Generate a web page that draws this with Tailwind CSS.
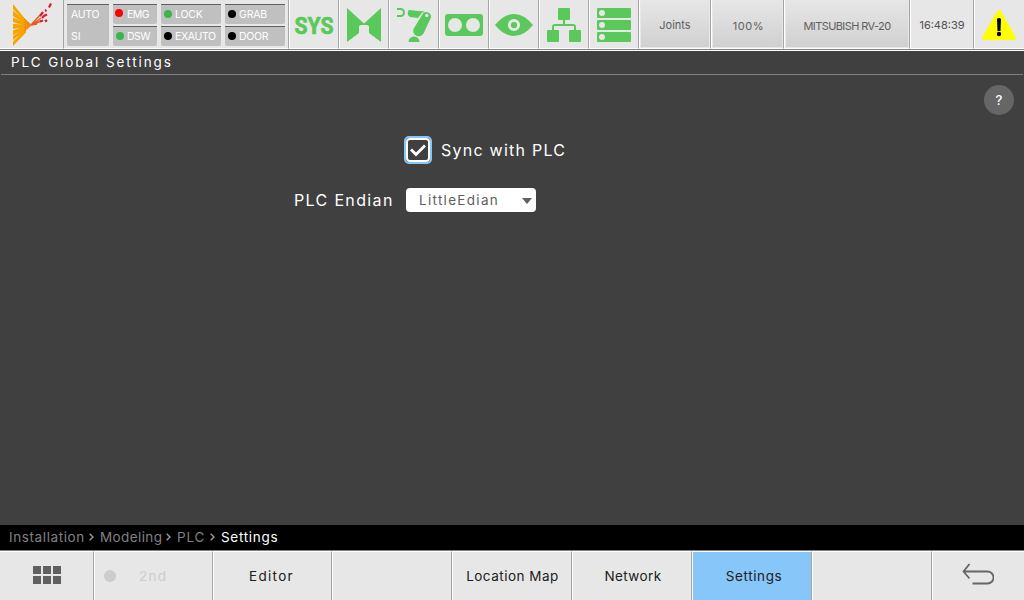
<!DOCTYPE html>
<html lang="en">
<head>
<meta charset="utf-8">
<title>PLC Global Settings</title>
<script src="https://cdn.jsdelivr.net/npm/@tailwindcss/browser@4"></script>
</head>
<body class="w-[1024px] h-[600px] overflow-hidden bg-[#404040] font-[Inter,'Liberation_Sans',sans-serif] flex flex-col whitespace-nowrap">
<header class="h-[50px] shrink-0 flex bg-[#e7e7e7] border-b border-[#808080]">
  <div class="w-16 border-r border-[#a5a5a5] border-b border-b-white">
    <svg class="w-[63px] h-12" viewBox="0 0 63 48">
      <g fill="#f5a400">
        <path d="M13 4l13 16v3L13 9z"/><path d="M13 10.500l13 11v3L13 16z"/><path d="M13 17.500l13 5.500v3l-13-4z"/><path d="M13 24l13 .5v2.500l-13 2z"/><path d="M13 30.500l13-5v3l-13 6.500z"/><path d="M13 36l13-9v3L13 40z"/><path d="M13 41.500l13-13v4L13 46z"/>
      </g>
      <path d="M24 19l7 6M24 22l7 3M24 25h7M24 28l7-3M24 31l7-6" stroke="#ee8a10" stroke-width="1.500"/>
      <path d="M31 25l9-10M32 25l9-7M32 25l9-4M31 25l6-1" stroke="#ea5a20" stroke-width="1.400" fill="none"/>
      <path d="M40 16l3-4M42 18l3-3M40 21.500l3-1M45 15.500l2-1M45 21.500l2-1.500M49 7.500l2-4M45 11l1.500-1" stroke="#dc1e28" stroke-width="2.200" fill="none"/>
    </svg>
  </div>
  <div class="w-[225px] flex gap-1 pl-[3px] pt-1 pb-[2px] border-r border-[#a5a5a5] border-b border-b-white text-[10.5px] leading-[20px] text-white">
    <div class="w-[42px] h-[42px] bg-[#c0c0c0] border-t border-[#606060] rounded-b-[2px] pl-1">
      <div class="h-[22px] tracking-[-0.3px]">AUTO</div><div class="h-[19px]">SI</div>
    </div>
    <div class="w-11 grid gap-[2px] content-start">
      <div class="h-5 bg-[#c0c0c0] border-t border-[#606060] rounded-b-[2px] flex items-start pl-[2px] gap-1"><i class="size-2 mt-[4px] rounded-full bg-[#f00]"></i><span class="tracking-[-0.5px]">EMG</span></div>
      <div class="h-5 bg-[#c0c0c0] border-t border-[#606060] rounded-b-[2px] flex items-start pl-[3px] gap-[3px]"><i class="size-2 mt-[5px] rounded-full bg-[#39b54a]"></i><span class="tracking-[-0.5px]">DSW</span></div>
    </div>
    <div class="w-[60px] grid gap-[2px] content-start">
      <div class="h-5 bg-[#c0c0c0] border-t border-[#606060] rounded-b-[2px] flex items-start pl-[3px] gap-[3px]"><i class="size-2 mt-[5px] rounded-full bg-[#39b54a]"></i><span class="tracking-[-0.2px]">LOCK</span></div>
      <div class="h-5 bg-[#c0c0c0] border-t border-[#606060] rounded-b-[2px] flex items-start pl-[3px] gap-[3px]"><i class="size-2 mt-[5px] rounded-full bg-black"></i><span class="tracking-[-0.35px]">EXAUTO</span></div>
    </div>
    <div class="w-[60px] grid gap-[2px] content-start">
      <div class="h-5 bg-[#c0c0c0] border-t border-[#606060] rounded-b-[2px] flex items-start pl-[3px] gap-[3px]"><i class="size-2 mt-[5px] rounded-full bg-black"></i><span class="tracking-[-0.2px]">GRAB</span></div>
      <div class="h-5 bg-[#c0c0c0] border-t border-[#606060] rounded-b-[2px] flex items-start pl-[3px] gap-[3px]"><i class="size-2 mt-[5px] rounded-full bg-black"></i><span class="tracking-[-0.3px]">DOOR</span></div>
    </div>
  </div>
  <div class="w-[50px] border-r border-r-[#a5a5a5] border-l border-l-white border-b border-b-white">
    <svg class="w-12 h-12 overflow-visible" viewBox="290 0 48 48"><text x="294.500" y="33.800" textLength="39" lengthAdjust="spacingAndGlyphs" font-family="Roboto" font-weight="700" font-size="24" fill="#5ac85a" stroke="#5ac85a" stroke-width=".7">SYS</text></svg>
  </div>
  <div class="w-[50px] border-r border-r-[#a5a5a5] border-l border-l-white border-b border-b-white">
    <svg class="w-12 h-12" viewBox="340 0 48 48"><path d="M347 8l17 15.500L381 8v34l-12-9v-7l-2-1h-6l-2 1v7l-12 9z" fill="#5ac85a"/></svg>
  </div>
  <div class="w-[50px] border-r border-r-[#a5a5a5] border-l border-l-white border-b border-b-white">
    <svg class="w-12 h-12" viewBox="390 0 48 48" fill="#5ac85a"><path d="M397 9h3.500a3.500 3.500 0 0 1 0 7h-3.500" fill="none" stroke="#5ac85a" stroke-width="2"/><path d="M408.500 10.500L422.500 12l-4.500 6-8-1q-3.500-2-1.500-6.500z"/><path d="M408.500 10.500L424 12" stroke="#5ac85a" stroke-width="1"/><path d="M422.300 14.500a4.700 4.700 0 0 1 8.700 3l-7.500 16a5.500 5.500 0 0 1-10-4.500z"/><circle cx="426.800" cy="15.500" r="1.700" fill="#e7e7e7"/><path d="M408.500 42a5.500 5.500 0 0 1 11 0z"/></svg>
  </div>
  <div class="w-[50px] border-r border-r-[#a5a5a5] border-l border-l-white border-b border-b-white">
    <svg class="w-12 h-12" viewBox="440 0 48 48"><rect x="445" y="14" width="38" height="22" rx="3" fill="#5ac85a"/><circle cx="455" cy="25" r="7" fill="#e7e7e7"/><circle cx="473" cy="25" r="7" fill="#e7e7e7"/></svg>
  </div>
  <div class="w-[50px] border-r border-r-[#a5a5a5] border-l border-l-white border-b border-b-white">
    <svg class="w-12 h-12" viewBox="490 0 48 48"><path d="M495 25Q504 14 514 14T533 25Q524 36 514 36T495 25z" fill="#5ac85a"/><circle cx="514" cy="25" r="4.600" fill="#5ac85a" stroke="#e7e7e7" stroke-width="3"/></svg>
  </div>
  <div class="w-[50px] border-r border-r-[#a5a5a5] border-l border-l-white border-b border-b-white">
    <svg class="w-12 h-12" viewBox="540 0 48 48" fill="#5ac85a"><rect x="558" y="8" width="12" height="12" rx="1"/><rect x="547" y="30" width="12" height="12" rx="1"/><rect x="569" y="30" width="12" height="12" rx="1"/><path d="M564 20v5M553 30v-3q0-2 2-2h18q2 0 2 2v3" fill="none" stroke="#5ac85a" stroke-width="2"/></svg>
  </div>
  <div class="w-[50px] border-r border-r-[#a5a5a5] border-l border-l-white border-b border-b-white">
    <svg class="w-12 h-12" viewBox="590 0 48 48" fill="#5ac85a"><rect x="597" y="8" width="34" height="10" rx="1"/><rect x="597" y="20" width="34" height="10" rx="1"/><rect x="597" y="32" width="34" height="10" rx="1"/><g fill="#e7e7e7"><circle cx="602" cy="13" r="3"/><circle cx="602" cy="25" r="3"/><circle cx="602" cy="37" r="3"/></g></svg>
  </div>
  <div class="w-[72px] border-r border-r-[#a5a5a5] border-l border-l-white border-b border-b-white p-px pt-0 text-[11px] text-[#606060]"><div class="h-full bg-linear-to-b from-[#e7e7e7] to-[#d0d0d0] flex items-center justify-center pt-[4px]">Joints</div></div>
  <div class="w-[73px] border-r border-r-[#a5a5a5] border-l border-l-white border-b border-b-white p-px pt-0 text-[11px] text-[#606060]"><div class="h-full bg-linear-to-b from-[#e7e7e7] to-[#d0d0d0] flex items-center justify-center pt-[5px] pl-[2px] tracking-[0.6px]">100%</div></div>
  <div class="w-[126px] border-r border-r-[#a5a5a5] border-l border-l-white border-b border-b-white p-px pt-0 text-[11px] text-[#606060]"><div class="h-full bg-linear-to-b from-[#e7e7e7] to-[#d0d0d0] flex items-center justify-center pt-[5px] tracking-[-0.6px]">MITSUBISH RV-20</div></div>
  <div class="w-16 border-r border-r-[#a5a5a5] border-l border-l-white border-b border-b-white text-[11px] text-[#505050] flex items-center justify-center pt-[3px]">16:48:39</div>
  <div class="w-[50px] border-l border-l-white border-b border-b-white">
    <svg class="w-12 h-12" viewBox="975 0 48 48"><path d="M999 12L1014 38H984z" fill="#ff0" stroke="#ff0" stroke-width="4" stroke-linejoin="round"/><path d="M997 19q2-2 4 0l-.5 12h-3z"/><circle cx="999" cy="34" r="2.200"/></svg>
  </div>
</header>
<main class="h-[475px] shrink-0 border-t border-white flex flex-col">
  <div class="mx-px h-6 shrink-0 border-b border-[#808080] text-white text-[13.5px] leading-[22px] pl-[10px] tracking-[1.9px]"><span class="tracking-[1.9px]">PLC Global Settings</span></div>
  <div class="flex justify-end pt-[10px] pr-[10px]"><div class="size-[30px] rounded-full bg-[#666] text-white text-[13px] font-medium flex items-center justify-center pt-px">?</div></div>
  <div class="flex items-center h-7 mt-[21px] pl-[404px] gap-[9px]">
    <svg class="size-7" viewBox="0 0 28 28" fill="none"><rect x="1" y="1" width="26" height="26" rx="4" stroke="#87c6f8" stroke-width="2"/><rect x="3" y="3" width="22" height="22" rx="3" stroke="#fff" stroke-width="2"/><path d="M7 13.500l5 5L21 9.500" stroke="#fff" stroke-width="2.800"/></svg>
    <span class="text-white text-base leading-7 tracking-[1.25px]">Sync with PLC</span>
  </div>
  <div class="flex items-center h-6 mt-6 pl-[294px]">
    <span class="w-[112px] text-white text-base tracking-[1.35px]">PLC Endian</span>
    <div class="w-[130px] h-6 rounded bg-white text-[#606060] text-[13.5px] flex items-center justify-between pl-[13px] pr-[4px] tracking-[1.3px]"><span>LittleEdian</span><svg class="w-[10px] h-[6px] mt-[2px]" viewBox="0 0 10 6"><path d="M0 0h10L5 6z" fill="#606060"/></svg></div>
  </div>
</main>
<nav class="h-[25px] shrink-0 bg-black text-[#808080] text-[13.5px] leading-[25px] pl-[9px] flex items-center">
  <span class="w-[80px] tracking-[0.6px]">Installation</span><svg class="w-[5px] h-2 mr-[6px] -mt-px" viewBox="0 0 5 8"><path d="M.7 .7L4 4 .7 7.300" fill="none" stroke="#999" stroke-width="1.400"/></svg>
  <span class="w-[66px] tracking-[0.4px]">Modeling</span><svg class="w-[5px] h-2 mr-[6px] -mt-px" viewBox="0 0 5 8"><path d="M.7 .7L4 4 .7 7.300" fill="none" stroke="#999" stroke-width="1.400"/></svg>
  <span class="w-[33px] tracking-[0.8px]">PLC</span><svg class="w-[5px] h-2 mr-[6px] -mt-px" viewBox="0 0 5 8"><path d="M.7 .7L4 4 .7 7.300" fill="none" stroke="#999" stroke-width="1.400"/></svg>
  <span class="text-white tracking-[0.7px]">Settings</span>
</nav>
<footer class="h-[50px] shrink-0 border-t border-[#808080] bg-[#e7e7e7] flex text-[13.5px] text-[#202020]">
  <div class="w-[94px] border-t border-t-white border-r border-r-[#a5a5a5] flex items-center justify-center"><svg class="w-7 h-[18px] -mt-[2px]" viewBox="0 0 28 18" fill="#606060"><path d="M0 0h8v8H0zM10 0h8v8h-8zM20 0h8v8h-8zM0 10h8v8H0zM10 10h8v8h-8zM20 10h8v8h-8z"/></svg></div>
  <div class="w-[119px] border-t border-t-white border-l border-l-white border-r border-r-[#a5a5a5] flex items-center pl-[9px] text-[#ccc]"><i class="size-3 rounded-full bg-[#ccc] mr-[23px]"></i><span class="tracking-[1.3px]">2nd</span></div>
  <div class="w-[119px] border-t border-t-white border-l border-l-white border-r border-r-[#a5a5a5] flex items-center justify-center tracking-[1.3px] pr-[2px]">Editor</div>
  <div class="w-[120px] border-t border-t-white border-l border-l-white border-r border-r-[#a5a5a5]"></div>
  <div class="w-[120px] border-t border-t-white border-l border-l-white border-r border-r-[#a5a5a5] flex items-center justify-center tracking-[0.5px] pl-px">Location Map</div>
  <div class="w-[120px] border-t border-t-white border-l border-l-white border-r border-r-[#a5a5a5] flex items-center justify-center tracking-[0.4px] pl-[2px]">Network</div>
  <div class="w-[120px] border-t border-t-white border-l border-l-white border-r border-r-[#a5a5a5] bg-[#87c6f8] flex items-center justify-center tracking-[0.6px] pl-[4px]">Settings</div>
  <div class="w-[120px] border-t border-t-white border-l border-l-white border-r border-r-[#a5a5a5]"></div>
  <div class="w-[92px] border-t border-t-white border-l border-l-white flex items-center justify-center"><svg class="w-8 h-[22px] -mt-[4px] mr-[2px]" viewBox="0 0 32 22" fill="none" stroke="#666" stroke-width="1.800"><path d="M7.500 1L1.500 8.500l6 7M2 8.500h23.500a6 6 0 0 1 0 12H10.500"/></svg></div>
</footer>
</body>
</html>
